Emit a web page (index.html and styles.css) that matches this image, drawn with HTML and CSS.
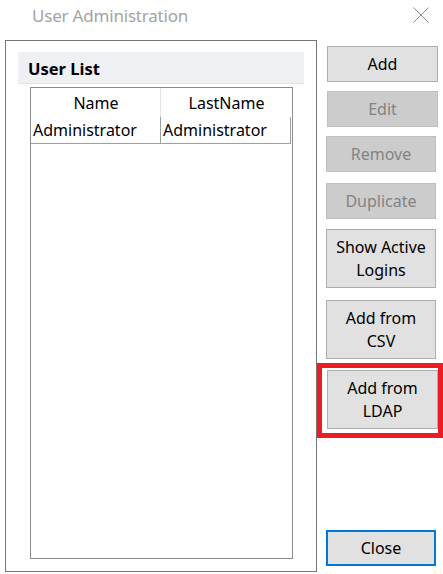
FILE: index.html
```html
<!DOCTYPE html>
<html>
<head>
<meta charset="utf-8">
<link rel="stylesheet" href="styles.css">
</head>
<body>
<div class="window">
  <div class="titlebar">
    <span class="title">User Administration</span>
    <svg class="close-x" width="16" height="16" viewBox="0 0 16 16"><path d="M0.5 0.5 L15.5 15.5 M15.5 0.5 L0.5 15.5" stroke="#8a8a8a" stroke-width="1" fill="none"/></svg>
  </div>
  <div class="main">
    <div class="panel">
      <div class="panel-header">User List</div>
      <div class="grid">
        <div class="cell head head-1">Name</div>
        <div class="cell head head-2">LastName</div>
        <div class="cell data">Administrator</div>
        <div class="cell data">Administrator</div>
      </div>
    </div>
    <div class="actions">
      <button class="btn btn-add">Add</button>
      <button class="btn disabled btn-edit">Edit</button>
      <button class="btn disabled btn-remove">Remove</button>
      <button class="btn disabled btn-dup">Duplicate</button>
      <button class="btn tall btn-show">Show Active<br>Logins</button>
      <button class="btn tall btn-csv">Add from<br>CSV</button>
      <div class="highlight">
        <button class="btn tall btn-ldap">Add from<br>LDAP</button>
      </div>
      <button class="btn btn-close">Close</button>
    </div>
  </div>
</div>
</body>
</html>
```

FILE: styles.css
```css
html, body {
  margin: 0;
  padding: 0;
  background: #ffffff;
}
body {
  width: 443px;
  height: 574px;
  overflow: hidden;
  font-family: "Noto Sans", "Open Sans", sans-serif;
  color: #000;
}
.titlebar {
  height: 40px;
  display: flex;
  align-items: flex-start;
  justify-content: space-between;
  box-sizing: border-box;
}
.title {
  font-size: 17px;
  line-height: 23px;
  color: #a3a3a3;
  margin-left: 32px;
  margin-top: 4px;
  letter-spacing: -0.2px;
}
.close-x {
  margin-top: 7px;
  margin-right: 14px;
}
.main {
  display: flex;
  padding-left: 5px;
}
.panel {
  width: 312px;
  height: 532px;
  box-sizing: border-box;
  border: 1px solid #767676;
  padding: 11px 0 0 12px;
}
.panel-header {
  width: 286px;
  height: 32px;
  box-sizing: border-box;
  background: #eff0f4;
  border-bottom: 1px solid #e2e3e8;
  font-weight: bold;
  font-size: 16.5px;
  line-height: 34px;
  padding-left: 10px;
}
.grid {
  margin-top: 3px;
  margin-left: 12px;
  width: 263px;
  height: 472px;
  box-sizing: border-box;
  border: 1px solid #8c8c8c;
  display: grid;
  grid-template-columns: 130px 130px;
  grid-template-rows: 29px 27px;
  align-content: start;
  font-size: 16px;
}
.cell {
  box-sizing: border-box;
  white-space: nowrap;
  overflow: hidden;
}
.head {
  text-align: center;
  line-height: 31px;
}
.head-1 {
  border-right: 1px solid #e3e3e3;
  padding-left: 1px;
}
.head-2 {
  padding-left: 1px;
}
.data {
  border-right: 1px solid #a0a0a0;
  border-bottom: 1px solid #a0a0a0;
  line-height: 27px;
  padding-left: 2px;
}
.actions {
  display: flex;
  flex-direction: column;
  align-items: flex-start;
  margin-left: 10px;
}
.btn {
  width: 111px;
  height: 36px;
  box-sizing: border-box;
  background: #e1e1e1;
  border: 1px solid #adadad;
  font-family: "Noto Sans", "Open Sans", sans-serif;
  font-size: 16px;
  color: #000;
  padding: 0;
  line-height: 23px;
  text-align: center;
}
.btn.disabled {
  background: #cccccc;
  border-color: #bfbfbf;
  color: #838383;
}
.btn.tall {
  height: 59px;
}
.btn-add { margin-top: 6px; }
.btn-edit { margin-top: 9px; }
.btn-remove { margin-top: 9px; width: 110px; margin-left: -1px; }
.btn-dup { margin-top: 11px; width: 110px; margin-left: -1px; }
.btn-show { margin-top: 10px; width: 110px; margin-left: -1px; }
.btn-csv { margin-top: 12px; width: 110px; margin-left: -1px; height: 58px; }
.highlight {
  margin-top: 4px;
  margin-left: -10px;
  width: 126px;
  height: 75px;
  box-sizing: border-box;
  border: 5px solid #ed1c24;
  padding: 2px 0 0 5px;
}
.btn-ldap {
  height: 61px;
}
.btn-close {
  margin-top: 92px;
  width: 110px;
  margin-left: -1px;
  border: 2px solid #0078d7;
}
```
